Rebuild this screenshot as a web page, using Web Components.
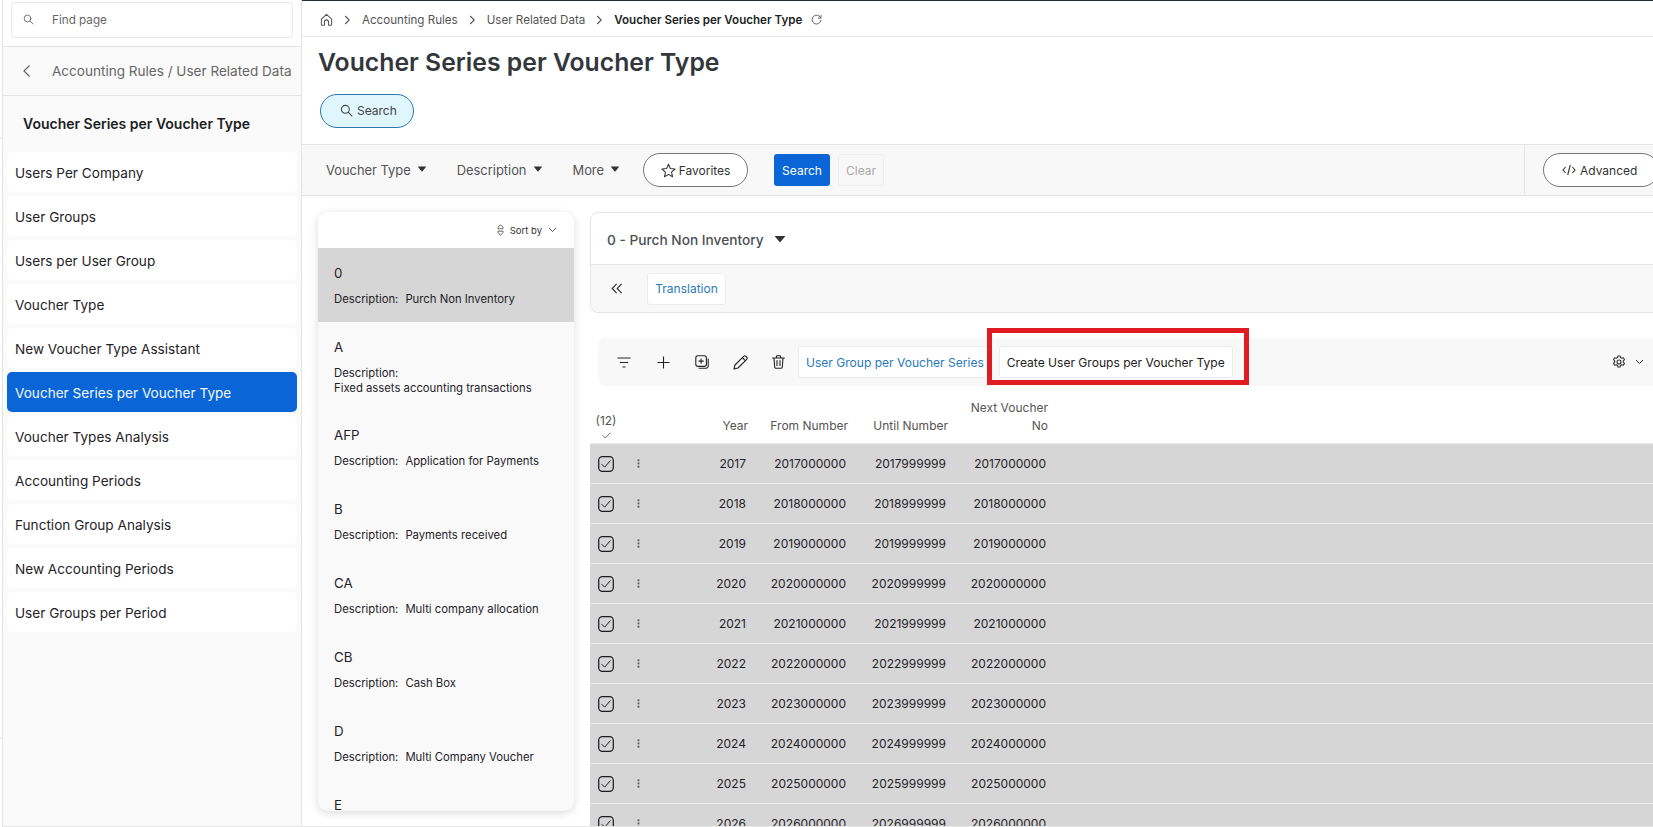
<!DOCTYPE html>
<html lang="en"><head><meta charset="utf-8"><title>Voucher Series per Voucher Type</title>
<style>
html,body{margin:0;height:827px;overflow:hidden;background:#fff;font-family:Inter,"Liberation Sans",sans-serif;color:#1f2328}
</style></head><body>
<app-shell>
  <side-nav slot="nav" back="Accounting Rules / User Related Data" heading="Voucher Series per Voucher Type">
    <nav-item>Users Per Company</nav-item>
    <nav-item>User Groups</nav-item>
    <nav-item>Users per User Group</nav-item>
    <nav-item>Voucher Type</nav-item>
    <nav-item>New Voucher Type Assistant</nav-item>
    <nav-item active>Voucher Series per Voucher Type</nav-item>
    <nav-item>Voucher Types Analysis</nav-item>
    <nav-item>Accounting Periods</nav-item>
    <nav-item>Function Group Analysis</nav-item>
    <nav-item>New Accounting Periods</nav-item>
    <nav-item>User Groups per Period</nav-item>
  </side-nav>
  <crumb-bar></crumb-bar>
  <page-head></page-head>
  <filter-bar></filter-bar>
  <content-area>
    <list-panel slot="list">
      <list-item code="0" selected>Purch Non Inventory</list-item>
      <list-item code="A" wrap>Fixed assets accounting transactions</list-item>
      <list-item code="AFP">Application for Payments</list-item>
      <list-item code="B">Payments received</list-item>
      <list-item code="CA">Multi company allocation</list-item>
      <list-item code="CB">Cash Box</list-item>
      <list-item code="D">Multi Company Voucher</list-item>
      <list-item code="E" nodesc></list-item>
    </list-panel>
    <detail-card></detail-card>
    <grid-toolbar></grid-toolbar>
    <data-table></data-table>
  </content-area>
</app-shell>
<script>
const I = {
 search:(s)=>`<svg width="${s}" height="${s}" viewBox="0 0 16 16" fill="none" stroke="currentColor" stroke-width="1.3" stroke-linecap="round"><circle cx="6.6" cy="6.6" r="4.9"/><path d="M10.3 10.3l4.3 4.3"/></svg>`,
 chevL:`<svg width="10" height="14" viewBox="0 0 10 14" fill="none" stroke="currentColor" stroke-width="1.2"><path d="M7.5 1.5L2 7l5.5 5.5"/></svg>`,
 chevR:`<svg width="7" height="10" viewBox="0 0 7 10" fill="none" stroke="currentColor" stroke-width="1.1"><path d="M1.2 1l4 4-4 4"/></svg>`,
 home:`<svg width="13" height="13" viewBox="0 0 14 14" fill="none" stroke="currentColor" stroke-width="1.1" stroke-linejoin="round"><path d="M1.5 6.5L7 1.5l5.5 5v6a.8.8 0 0 1-.8.8H9.2V9.6a2.2 2.2 0 0 0-4.4 0v3.7H2.3a.8.8 0 0 1-.8-.8z"/></svg>`,
 refresh:`<svg width="11" height="11" viewBox="0 0 12 12" fill="none" stroke="currentColor" stroke-width="1" stroke-linecap="round"><path d="M10.6 4.2A4.9 4.9 0 1 0 10.9 7"/><path d="M10.9 1.6v2.8H8.1"/></svg>`,
 star:`<svg width="15" height="15" viewBox="0 0 16 16" fill="none" stroke="currentColor" stroke-width="1.1" stroke-linejoin="round"><path d="M8 1.3l2 4.6 5 .5-3.8 3.3 1.1 4.9L8 12.1l-4.3 2.5 1.1-4.9L1 6.4l5-.5z"/></svg>`,
 code:`<svg width="14" height="12" viewBox="0 0 14 12" fill="none" stroke="currentColor" stroke-width="1.1"><path d="M3.6 3L1 6l2.6 3M10.4 3L13 6l-2.6 3M8.3 1L5.7 11"/></svg>`,
 caret:`<svg width="8" height="6" viewBox="0 0 8 6" fill="currentColor"><path d="M0.3 0.6h7.4a.3.3 0 0 1 .2.5L4.3 5.4a.4.4 0 0 1-.6 0L.1 1.1a.3.3 0 0 1 .2-.5z"/></svg>`,
 down:`<svg width="9" height="6" viewBox="0 0 9 6" fill="none" stroke="currentColor" stroke-width="1"><path d="M1 1l3.5 3.5L8 1"/></svg>`,
 sort:`<svg width="7" height="12" viewBox="0 0 7 12" fill="none" stroke="currentColor" stroke-width=".9"><path d="M3.5 .8L6 3.4v1.4H1V3.4zM1 7.2h5v1.4l-2.5 2.6L1 8.6z"/></svg>`,
 dbl:`<svg width="12" height="11" viewBox="0 0 12 11" fill="none" stroke="currentColor" stroke-width="1.2"><path d="M5.6 .8L1.2 5.5l4.4 4.7M10.6 .8L6.2 5.5l4.4 4.7"/></svg>`,
 filter:`<svg width="14" height="11" viewBox="0 0 14 11" fill="none" stroke="currentColor" stroke-width="1.1"><path d="M.5 1h13M3 5.5h8M5.500 10h3"/></svg>`,
 plus:`<svg width="13" height="13" viewBox="0 0 13 13" fill="none" stroke="currentColor" stroke-width="1.1"><path d="M6.5 .5v12M.5 6.5h12"/></svg>`,
 dup:`<svg width="14" height="14" viewBox="0 0 14 14" fill="none" stroke="currentColor" stroke-width="1.1"><rect x=".8" y=".8" width="10.6" height="10.6" rx="2.2"/><path d="M6.1 3.5v5.2M3.5 6.1h5.2M13.2 3.6v7.4a2.2 2.2 0 0 1-2.2 2.2H3.6"/></svg>`,
 pencil:`<svg width="15" height="15" viewBox="0 0 15 15" fill="none" stroke="currentColor" stroke-width="1.1" stroke-linejoin="round"><path d="M1 14l1-4L10.700 1.300a1.500 1.500 0 0 1 2.100 0l.9.900a1.500 1.500 0 0 1 0 2.100L5 13z"/><path d="M9.300 2.700l3 3"/></svg>`,
 trash:`<svg width="13" height="14" viewBox="0 0 13 14" fill="none" stroke="currentColor" stroke-width="1.1" stroke-linecap="round"><path d="M.6 3h11.800M4.400 3V1.700a.9.900 0 0 1 .9-.9h2.400a.9.900 0 0 1 .9.900V3M2 3l.7 9.300a1 1 0 0 0 1 .9h5.600a1 1 0 0 0 1-.9L11 3M5 5.500v5M8 5.500v5"/></svg>`,
 gear:`<svg width="14" height="14" viewBox="0 0 14 14" fill="none" stroke="currentColor" stroke-width="1.1" stroke-linejoin="round"><circle cx="7" cy="7" r="2"/><path d="M5.900 1h2.200l.4 1.600 1.300.7 1.600-.5 1.100 1.900-1.200 1.100v1.400l1.200 1.100-1.100 1.900-1.600-.5-1.300.7-.4 1.600H5.900l-.4-1.600-1.300-.7-1.600.5-1.100-1.900 1.200-1.100V5.800L1.500 4.700l1.100-1.900 1.600.5 1.300-.7z"/></svg>`,
 check:`<svg width="9" height="7" viewBox="0 0 9 7" fill="none" stroke="currentColor" stroke-width=".9"><path d="M.7 3.400l2.600 2.600L8.300.8"/></svg>`,
 box:`<svg width="16" height="16" viewBox="0 0 16 16" fill="none" stroke="#1a1d21" stroke-width="1.25"><rect x=".7" y=".7" width="14.600" height="14.600" rx="3.800"/><path d="M3.700 8.200l3 3L12.400 4.500" stroke-width="1"/></svg>`,
 kebab:`<svg width="3" height="9" viewBox="0 0 3 9" fill="#555"><rect x=".6" y=".4" width="1.800" height="1.800"/><rect x=".6" y="3.600" width="1.800" height="1.800"/><rect x=".6" y="6.800" width="1.800" height="1.800"/></svg>`
};
function def(name, render){
  customElements.define(name, class extends HTMLElement{
    constructor(){super();this.attachShadow({mode:'open'})}
    connectedCallback(){this.shadowRoot.innerHTML=render(this)}
  });
}
def('app-shell',()=>`<style>
:host{display:flex;height:827px;overflow:hidden}
.main{flex:1;min-width:0;display:flex;flex-direction:column;box-sizing:border-box;border-top:1px solid #22303c;border-bottom:1px solid #e6e6e6;height:827px;overflow:hidden}
</style><slot name="nav"></slot><div class="main"><slot></slot></div>`);
def('side-nav',(h)=>`<style>
:host{display:flex;flex-direction:column;box-sizing:border-box;width:302px;flex:none;height:827px;padding-left:2px;background:#fff;position:relative}
.in{flex:1;display:flex;flex-direction:column;background:#fafafa;border-left:1px solid #e4e4e4;border-right:1px solid #e4e4e4;border-bottom:1px solid #e6e6e6}
.top{background:#fff;height:47px;box-sizing:border-box;padding:2px 8px 0 8px;border-bottom:1px solid #e4e4e4}
.find{height:36px;box-sizing:border-box;border:1px solid #e6e6e6;border-radius:4px;display:flex;align-items:center;padding:0 0 1px 11px;color:#666;font-size:11.7px;gap:18px}
.find svg{flex:none}
.back{height:49px;box-sizing:border-box;border-bottom:1px solid #e4e4e4;display:flex;align-items:center;padding-left:19px;gap:20px;color:#666;font-size:13.55px;white-space:nowrap}
h2{margin:0;height:56px;box-sizing:border-box;padding:19px 0 0 20px;font-size:14px;font-weight:600;line-height:17px;color:#1b1f24;white-space:nowrap}
.list{display:flex;flex-direction:column;gap:4px;padding:0 4px}
.m{position:absolute;left:0;width:2px;height:1px;background:#e4e4e4}
</style><div class="m" style="top:138px"></div><div class="m" style="top:738px"></div><div class="in"><div class="top"><div class="find">${I.search(11)}<span>Find page</span></div></div>
<div class="back">${I.chevL}<span>${h.getAttribute('back')}</span></div>
<h2>${h.getAttribute('heading')}</h2><div class="list"><slot></slot></div></div>`);
def('nav-item',(h)=>`<style>
:host{display:flex;align-items:center;height:40px;box-sizing:border-box;padding:1px 0 0 8px;border-radius:5px;background:#fff;font-size:13.6px;color:#1f2328;white-space:nowrap}
:host([active]){background:#0a66d6;color:#f2f7ff}
</style><slot></slot>`);
def('crumb-bar',()=>`<style>
:host{display:flex;align-items:center;height:36px;box-sizing:border-box;flex:none;border-bottom:1px solid #e8e8e8;padding:2px 0 0 18px;font-size:11.6px;color:#555;white-space:nowrap}
.c{display:inline-flex;margin:0 11px 0 11px;color:#555}.b{font-weight:600;color:#1b1f24}
.r{display:inline-flex;margin-left:9px;color:#555}.h{display:inline-flex}
</style><span class="h">${I.home}</span><span class="c">${I.chevR}</span><span>Accounting Rules</span><span class="c">${I.chevR}</span><span>User Related Data</span><span class="c">${I.chevR}</span><span class="b">Voucher Series per Voucher Type</span><span class="r">${I.refresh}</span>`);
def('page-head',()=>`<style>
:host{display:block;height:107px;box-sizing:border-box;flex:none;padding:8px 0 0 16px}
h1{margin:0;font-size:24.75px;line-height:34px;font-weight:600;color:#33373b;white-space:nowrap}
.p{display:inline-flex;align-items:center;gap:4px;box-sizing:border-box;margin:15px 0 0 2px;width:94px;height:34px;padding:0 0 1px 19px;border:1px solid #2a78b0;border-radius:17px;background:#e0f6fd;color:#444;font-size:12px}
</style><h1>Voucher Series per Voucher Type</h1><div class="p">${I.search(13)}<span>Search</span></div>`);
def('filter-bar',()=>`<style>
:host{display:flex;align-items:center;height:52px;box-sizing:border-box;flex:none;background:#f8f8f8;border-top:1px solid #e4e4e4;border-bottom:1px solid #e4e4e4;padding-left:24px;font-size:12.9px;color:#555;white-space:nowrap;overflow:hidden}
.f{display:inline-flex;align-items:center;gap:7px;color:#555}.f svg{color:#333;margin-top:-3px}
.pill{display:inline-flex;align-items:center;justify-content:center;gap:3px;box-sizing:border-box;height:34px;border:1px solid #777;border-radius:17px;background:#fff;font-size:12px;color:#333}
.s{display:inline-flex;align-items:center;justify-content:center;box-sizing:border-box;height:32px;width:56px;background:#0a66d6;border-radius:3px;color:#fff;font-size:12px}
.cl{display:inline-flex;align-items:center;justify-content:center;box-sizing:border-box;height:32px;width:46px;border:1px solid #eee;border-radius:3px;color:#aaa;font-size:12px;margin-left:8px}
.adv{margin-left:auto;align-self:stretch;display:flex;align-items:center;border-left:1px solid #e4e4e4;width:129px;box-sizing:border-box;padding-left:18px;flex:none}
.adv .pill{width:116px;flex:none;gap:4px;justify-content:flex-start;padding-left:18px}
</style><span class="f" style="margin-right:31px">Voucher Type ${I.caret}</span><span class="f" style="margin-right:31px">Description ${I.caret}</span><span class="f" style="margin-right:24px">More ${I.caret}</span><span class="pill" style="width:105px;margin-right:26px">${I.star}<span>Favorites</span></span><span class="s">Search</span><span class="cl">Clear</span><div class="adv"><span class="pill">${I.code}<span>Advanced</span></span></div>`);
def('content-area',()=>`<style>
:host{display:grid;grid-template-columns:256px 1fr;column-gap:16px;padding:16px 0 0 16px;align-items:start;flex:1;min-height:0;min-width:0}
.r{min-width:0;margin-right:-10px}
.l{grid-row:1}
</style><div class="l"><slot name="list"></slot></div><div class="r"><slot></slot></div>`);
def('list-panel',()=>`<style>
:host{display:block;width:256px;height:599px;overflow:hidden;border-radius:10px;background:#f9f9fa;box-shadow:0 2px 8px rgba(0,0,0,.14)}
.h{height:36px;box-sizing:border-box;background:#fff;display:flex;align-items:center;justify-content:flex-end;gap:6px;padding-right:17px;font-size:9.5px;color:#333}
.h svg{color:#555}.h .d{display:inline-flex}
</style><div class="h">${I.sort}<span>Sort by</span><span class="d">${I.down}</span></div><slot></slot>`);
def('list-item',(h)=>`<style>
:host{display:block;box-sizing:border-box;height:74px;padding:17px 0 0 16px;color:#1f2328}
:host([selected]){background:#d6d6d6}
:host([wrap]){height:88px}
.c{font-size:13.3px;line-height:17px;margin-bottom:10px}
.d{font-size:11.3px;line-height:15px;display:flex;gap:7px;white-space:nowrap}
:host([wrap]) .d{display:block}
:host([wrap]) .l{display:block}
</style><div class="c">${h.getAttribute('code')}</div>${h.hasAttribute('nodesc')?'':'<div class="d"><span class="l">Description:</span><span><slot></slot></span></div>'}`);
def('detail-card',()=>`<style>
:host{display:block;box-sizing:border-box;height:101px;border:1px solid #e6e6e6;border-radius:8px 0 0 8px;background:#fff;overflow:hidden}
.t{height:52px;box-sizing:border-box;border-bottom:1px solid #e6e6e6;display:flex;align-items:center;gap:11px;padding:3px 0 0 16px;font-size:13.7px;font-weight:500;color:#4a4f54;white-space:nowrap}
.t svg{color:#333;width:10px;height:8px;margin-top:-3px}
.b{height:47px;background:#f8f8f8;display:flex;align-items:center;padding:0 0 0 20px;color:#333;gap:24px}
.tr{display:inline-flex;align-items:center;justify-content:center;box-sizing:border-box;width:79px;height:32px;background:#fff;border:1px solid #ececec;border-radius:3px;color:#2a7ab8;font-size:12px}
</style><div class="t"><span>0 - Purch Non Inventory</span>${I.caret}</div><div class="b">${I.dbl}<span class="tr">Translation</span></div>`);
def('grid-toolbar',()=>`<style>
:host{display:flex;align-items:center;position:relative;box-sizing:border-box;height:48px;margin:25px 0 0 8px;background:#f8f8f8;border-radius:8px 0 0 8px;padding-left:19px;color:#222;font-size:12.05px;white-space:nowrap}
.i{display:flex;justify-content:flex-start;flex:none}
.btn{display:inline-flex;align-items:center;box-sizing:border-box;height:32px;background:#fff;border:1px solid #ececec;border-radius:3px;padding:0 7px}
.blue{color:#2a7ab8;margin-left:-13px;margin-right:7px}
.red{position:absolute;left:389px;top:-10px;width:262px;height:57px;box-sizing:border-box;border:5px solid #e01b22;pointer-events:none}
.end{margin-left:auto;display:flex;align-items:center;gap:9px;padding-right:19px;color:#333}
</style><span class="i" style="width:40px">${I.filter}</span><span class="i" style="width:38px">${I.plus}</span><span class="i" style="width:38px">${I.dup}</span><span class="i" style="width:39px">${I.pencil}</span><span class="i" style="width:39px">${I.trash}</span><span class="btn blue">User Group per Voucher Series</span><span class="btn">Create User Groups per Voucher Type</span><span class="end">${I.gear}${I.down}</span><div class="red"></div>`);
def('data-table',()=>{
  const cols='32px 32px 96px 100px 100px 100px 1fr';
  let rows='';
  for(let y=2017;y<=2026;y++){
    rows+=`<div class="row"><span class="bx">${I.box}</span><span class="kb">${I.kebab}</span><span class="n">${y}</span><span class="n">${y}000000</span><span class="n">${y}999999</span><span class="n">${y}000000</span><span></span></div>`;
  }
  return `<style>
:host{display:block;font-size:12px;color:#1f2328;white-space:nowrap}
.head,.row{display:grid;grid-template-columns:${cols}}
.head{height:57px;color:#555;align-items:end}
.head span.h{text-align:right;padding-right:2px;line-height:18px;padding-bottom:8px}
.cnt{display:flex;flex-direction:column;align-items:center;line-height:14px;padding:0 0 4px 0;margin-left:-1px;width:34px}
.cnt svg{margin-top:4px;color:#555}
.row{height:40px;box-sizing:border-box;background:#d6d6d6;border-top:1px solid #ececec;align-items:center}
.row:first-of-type{border-top-color:#d6d6d6}
.bx{display:flex;padding-left:8px}.kb{display:flex;padding-left:15px}
.n{text-align:right;padding-right:4px}
</style><div class="head"><span class="cnt"><span>(12)</span>${I.check}</span><span></span><span class="h">Year</span><span class="h">From Number</span><span class="h">Until Number</span><span class="h">Next Voucher<br>No</span><span></span></div>${rows}`;
});
</script>
</body></html>
